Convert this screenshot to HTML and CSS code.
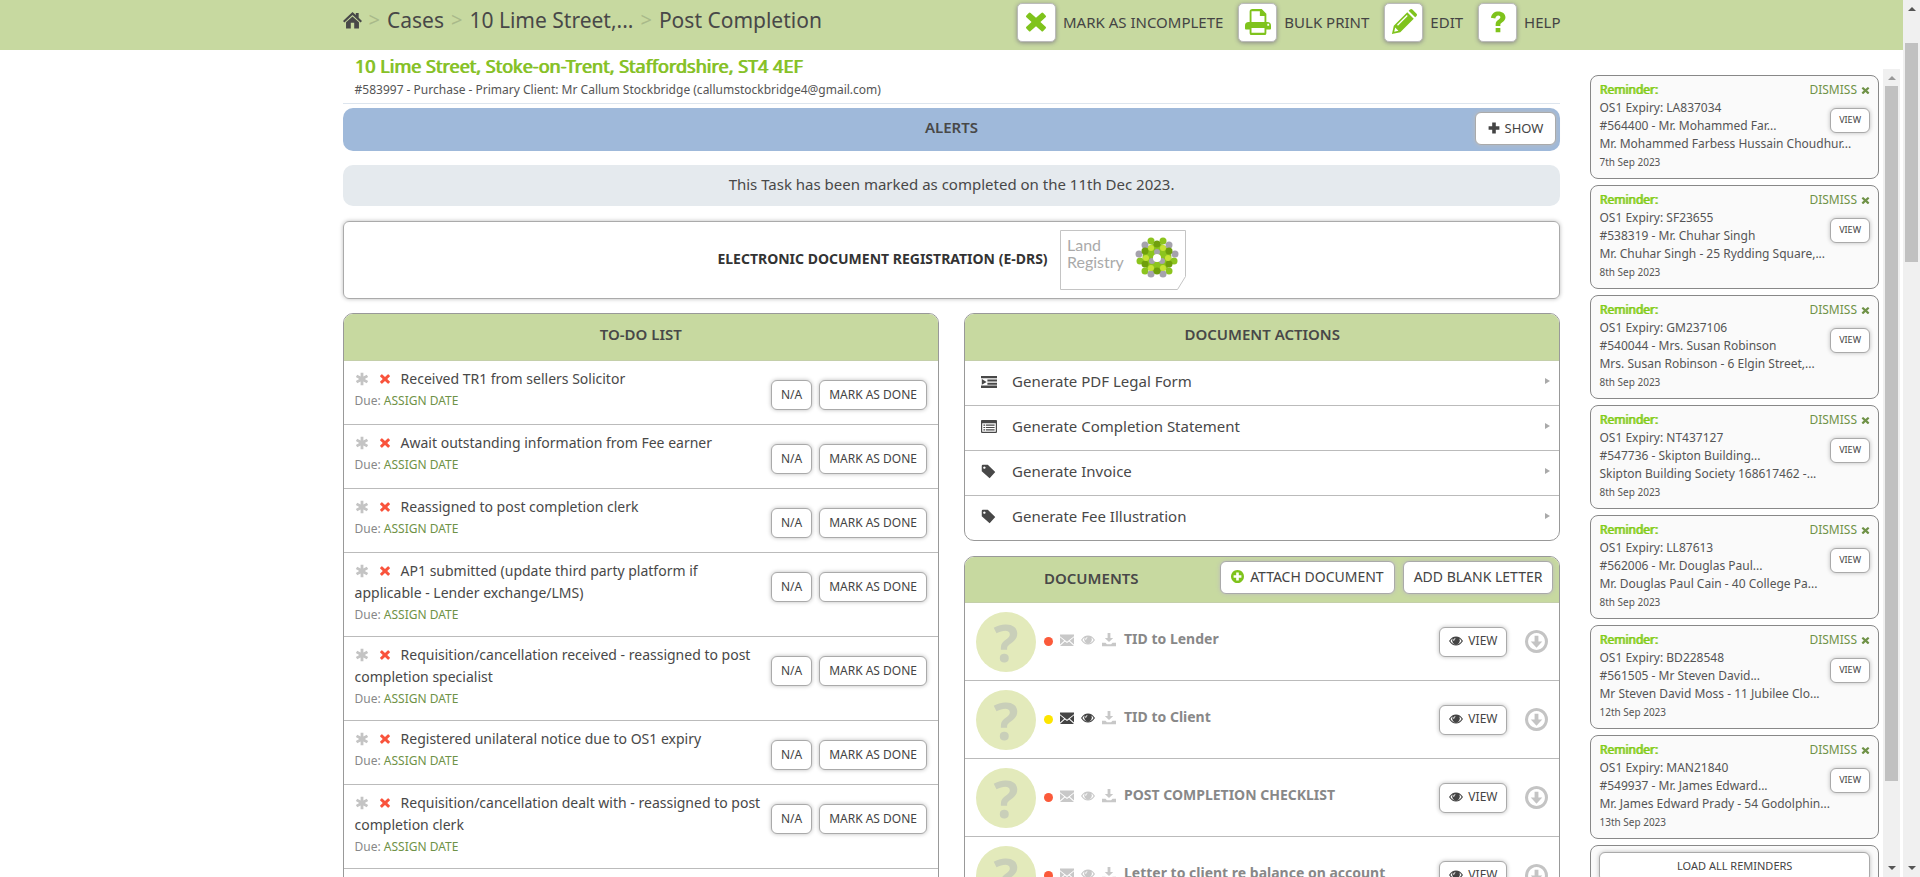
FILE: index.html
```html
<!DOCTYPE html>
<html lang="en">
<head>
<meta charset="utf-8">
<title>Post Completion</title>
<link rel="stylesheet" href="styles.css">
</head>
<body>
<svg class="sprite" aria-hidden="true">
  <symbol id="cross" viewBox="0 0 20 20"><path d="M4 2.500a1 1 0 0 1 1.500 0L10 6.500l4.500-4a1 1 0 0 1 1.500 0L18 4.500a1 1 0 0 1 0 1.500L13.700 10l4.300 4a1 1 0 0 1 0 1.500L16 17.500a1 1 0 0 1-1.500 0L10 13.500l-4.500 4a1 1 0 0 1-1.500 0L2 15.500a1 1 0 0 1 0-1.500L6.300 10 2 6a1 1 0 0 1 0-1.500z"/></symbol>
  <symbol id="plus" viewBox="0 0 20 20"><path d="M7 1h6v6h6v6h-6v6H7v-6H1V7h6z"/></symbol>
  <symbol id="home" viewBox="0 0 20 20"><path d="M10 1.500 0 11l1.500 1.500L10 4.700l8.500 7.800L20 11l-3.500-3.300V2.500h-3v2.300zM10 6.200l-6.800 6.200V19h5v-6h3.600v6h5v-6.600z"/></symbol>
  <symbol id="print" viewBox="0 0 28 28"><path fill-rule="evenodd" d="M5 14V3a3 3 0 0 1 3-3h10l5 5v9h1a4 4 0 0 1 4 4v3a1 1 0 0 1-1 1h-4v4a2 2 0 0 1-2 2H7a2 2 0 0 1-2-2v-4H1a1 1 0 0 1-1-1v-3a4 4 0 0 1 4-4zM7 2.500V14h14V7.500h-5v-5zM7 20.500v5h14v-5zm17-4.500v2h2v-2z"/></symbol>
  <symbol id="pencil" viewBox="0 0 28 28"><path fill-rule="evenodd" d="M1 27 3 18 17.500 3.500l7 7L10 25zM4.500 20 3.500 24.500 8 23.500zM7.500 18 18 7.500l-1-1L6.500 17zM19 2l1.500-1.500a2 2 0 0 1 2.500 0l4.500 4.500a2 2 0 0 1 0 2.500L26 9z"/></symbol>
  <symbol id="help" viewBox="0 0 20 28"><path d="M1 8.500C2 3 5.500.500 10.500.500c5 0 9 3 9 7.500 0 3-1.500 4.500-4 6.200-1.800 1.200-2.500 1.800-2.500 3.300v1.500H7V17c0-3 1.500-4.700 4-6.300 1.500-1 2-1.500 2-2.700s-1-2.200-2.700-2.200S7.500 7 6.500 9.500zM7 21.500h6V27H7z"/></symbol>
  <symbol id="star" viewBox="0 0 20 20"><path d="M8 1h4v5.500l4.800-2.700 2 3.400L14 10l4.800 2.800-2 3.400L12 13.500V19H8v-5.500l-4.800 2.700-2-3.400L6 10 1.200 7.200l2-3.400L8 6.500z"/></symbol>
  <symbol id="indent" viewBox="0 0 20 16"><path d="M0 1h20v3H0zM8 5.500h12V8H8zM8 9.500h12V12H8zM0 13h20v3H0zM1 5l6 3.700L1 12z"/></symbol>
  <symbol id="list" viewBox="0 0 20 16"><path fill-rule="evenodd" d="M1 0h18a1 1 0 0 1 1 1v14a1 1 0 0 1-1 1H1a1 1 0 0 1-1-1V1a1 1 0 0 1 1-1zm.500 4v10.500h17V4zM3 5.500h2V7H3zm3 0h11V7H6zM3 8.500h2V10H3zm3 0h11V10H6zM3 11.500h2V13H3zm3 0h11V13H6z"/></symbol>
  <symbol id="tag" viewBox="0 0 20 20"><path fill-rule="evenodd" d="M1 2.500A1.500 1.500 0 0 1 2.500 1H9l10 9.500-7.500 8.500L1 9.500zM4.500 3.200a1.600 1.600 0 1 0 .01 0z"/></symbol>
  <symbol id="mail" viewBox="0 0 20 20"><path d="M0 2h20v2.500l-10 8-10-8zM0 6l6 5-6 5.500zM20 6l-6 5 6 5.500zM7 12l3 2.400 3-2.400 7 6.500H0z"/></symbol>
  <symbol id="eye" viewBox="0 0 20 20"><path fill-rule="evenodd" d="M0 10c3-4.500 6-6.500 10-6.500s7 2 10 6.500c-3 4.500-6 6.500-10 6.500S3 14.500 0 10zm2 0c2 3 4.500 4.800 8 4.800s6-1.800 8-4.800c-1-1.500-2-2.600-3.200-3.400a5.500 5.500 0 1 1-9.600 0C4 7.400 3 8.500 2 10zm7-4c-2 .300-3 1.500-3 3.500h1.500c0-1.300.500-2 1.700-2.200z"/></symbol>
  <symbol id="down" viewBox="0 0 20 20"><path d="M8 0h4v7h4l-6 6-6-6h4zM0 14h5l2 2h6l2-2h5v5H0z"/></symbol>
  <symbol id="circle-down" viewBox="0 0 24 24"><path fill-rule="evenodd" d="M12 0a12 12 0 1 1-.01 0zM12 3.200a8.800 8.800 0 1 0 .01 0zM10 6h4v6h4l-6 6.500L6 12h4z"/></symbol>
  <symbol id="circle-plus" viewBox="0 0 20 20"><path fill-rule="evenodd" d="M10 0a10 10 0 1 1-.01 0zM8 4v4H4v4h4v4h4v-4h4V8h-4V4z"/></symbol>
</svg>

<div class="viewport">
  <header class="topbar">
    <div class="topbar-inner">
      <nav class="crumbs" aria-label="Breadcrumb">
        <a href="#" aria-label="Home"><svg class="i-home"><use href="#home"/></svg></a><span class="sep">&gt;</span>
        <a href="#">Cases</a><span class="sep">&gt;</span>
        <a href="#">10 Lime Street,...</a><span class="sep">&gt;</span>
        <a href="#">Post Completion</a>
      </nav>
      <div class="tools">
        <button class="tool"><span class="tile"><svg class="i-24"><use href="#cross"/></svg></span>MARK AS INCOMPLETE</button>
        <button class="tool"><span class="tile"><svg class="i-26"><use href="#print"/></svg></span>BULK PRINT</button>
        <button class="tool"><span class="tile"><svg class="i-26"><use href="#pencil"/></svg></span>EDIT</button>
        <button class="tool"><span class="tile"><svg class="i-22"><use href="#help"/></svg></span>HELP</button>
      </div>
    </div>
  </header>

  <div class="page">
    <main class="main">
      <div class="case-head">
        <h1>10 Lime Street, Stoke-on-Trent, Staffordshire, ST4 4EF</h1>
        <p>#583997 - Purchase - Primary Client: Mr Callum Stockbridge (callumstockbridge4@gmail.com)</p>
      </div>
      <section class="alerts"><h2>ALERTS</h2><button class="btn btn-lg"><svg class="i-12"><use href="#plus"/></svg>SHOW</button></section>
      <p class="notice">This Task has been marked as completed on the 11th Dec 2023.</p>
      <section class="edrs">
        <strong>ELECTRONIC DOCUMENT REGISTRATION (E-DRS)</strong>
        <svg class="registry" viewBox="0 0 126 60" role="img" aria-label="Land Registry">
          <path d="M.5.500h125v46l-8 13H.5z" fill="#fff" stroke="#c4c4c4"/>
          <text x="7" y="21">Land</text><text x="7" y="38">Registry</text>
          <circle cx="97" cy="28" r="9" fill="none" stroke="#8cc41e" stroke-width="11"/>
          <g fill="#8cc41e">
            <circle cx="91" cy="11" r="3.500"/><circle cx="103" cy="11" r="3.500"/><circle cx="80" cy="31" r="3.500"/><circle cx="114" cy="31" r="3.500"/><circle cx="85" cy="41" r="3.500"/><circle cx="109" cy="41" r="3.500"/>
          </g>
          <g fill="#a5a2ac">
            <circle cx="85" cy="15" r="3.500"/><circle cx="109" cy="15" r="3.500"/><circle cx="79" cy="24" r="3.500"/><circle cx="115" cy="24" r="3.500"/><circle cx="91" cy="44" r="3.500"/><circle cx="103" cy="44" r="3.500"/><circle cx="97" cy="22" r="3"/><circle cx="92" cy="31" r="3"/><circle cx="102" cy="31" r="3"/>
          </g>
          <g fill="#6f9f0c">
            <circle cx="97" cy="14" r="3.500"/><circle cx="85" cy="21" r="3.500"/><circle cx="109" cy="21" r="3.500"/><circle cx="85" cy="34" r="3.500"/><circle cx="109" cy="34" r="3.500"/><circle cx="97" cy="41" r="3.500"/>
          </g>
          <g fill="#c6e334">
            <circle cx="91" cy="18" r="3"/><circle cx="103" cy="18" r="3"/><circle cx="86" cy="28" r="3"/><circle cx="108" cy="28" r="3"/><circle cx="91" cy="38" r="3"/><circle cx="103" cy="38" r="3"/>
          </g>
          <circle cx="97" cy="28" r="4" fill="#fff"/>
        </svg>
      </section>

      <div class="columns">
        <section class="panel">
          <header class="panel-head"><h2>TO-DO LIST</h2></header>
          <ul class="rows" id="todo"></ul>
        </section>
        <div class="stack">
          <section class="panel">
            <header class="panel-head"><h2>DOCUMENT ACTIONS</h2></header>
            <ul class="rows">
              <li><a class="action" href="#"><svg class="i-wide"><use href="#indent"/></svg>Generate PDF Legal Form<span class="tri"></span></a></li>
              <li><a class="action" href="#"><svg class="i-wide"><use href="#list"/></svg>Generate Completion Statement<span class="tri"></span></a></li>
              <li><a class="action" href="#"><svg class="i-tag"><use href="#tag"/></svg>Generate Invoice<span class="tri"></span></a></li>
              <li><a class="action" href="#"><svg class="i-tag"><use href="#tag"/></svg>Generate Fee Illustration<span class="tri"></span></a></li>
            </ul>
          </section>
          <section class="panel">
            <header class="panel-head docs-head"><h2>DOCUMENTS</h2><div class="head-buttons"><button class="btn btn-lg attach"><svg class="i-13"><use href="#circle-plus"/></svg>ATTACH DOCUMENT</button><button class="btn btn-lg">ADD BLANK LETTER</button></div></header>
            <ul class="rows" id="docs"></ul>
          </section>
        </div>
      </div>
    </main>

    <aside class="side">
      <div class="reminders" id="reminders"></div>
      <div class="bar side-bar" aria-hidden="true"><span class="up"></span><span class="thumb"></span><span class="dn"></span></div>
    </aside>
  </div>
</div>
<div class="bar page-bar" aria-hidden="true"><span class="up"></span><span class="thumb"></span><span class="dn"></span></div>
<script src="app.js"></script>
</body>
</html>
```
FILE: styles.css
```css
* { box-sizing: border-box; }
html, body { height: 100%; }
body { margin: 0; display: flex; overflow: hidden; background: #fff; color: #484848; font: 14px/22px "Noto Sans", "Open Sans", sans-serif; }
h1, h2, p, ul { margin: 0; padding: 0; }
ul { list-style: none; }
a { color: inherit; text-decoration: none; }
button { font-family: inherit; color: #444; cursor: pointer; }
svg { fill: currentColor; flex: none; }
.sprite { position: absolute; width: 0; height: 0; }
.viewport { flex: 1; min-width: 0; height: 100vh; overflow: hidden; display: flex; flex-direction: column; }

.i-home { width: 19px; height: 20px; display: block; }
.i-12 { width: 12px; height: 12px; }
.i-13 { width: 13px; height: 13px; }
.i-14 { width: 14px; height: 14px; }
.i-tag { width: 15px; height: 15px; margin-right: 1px; }
.i-wide { width: 16px; height: 13px; }
.i-24 { width: 24px; height: 24px; }
.i-22 { width: 22px; height: 22px; }
.i-26 { width: 26px; height: 26px; }

.topbar { flex: none; height: 50px; padding: 0 18%; background: #c7d9a0; }
.topbar-inner { display: flex; justify-content: space-between; height: 44px; align-items: center; }
.crumbs { display: flex; align-items: center; gap: 7px; font-size: 21px; line-height: 40px; padding-bottom: 4px; }
.sep { color: #a9b98a; font-size: 20px; }
.tools { display: flex; gap: 15px; }
.tool { display: flex; align-items: center; gap: 7px; padding: 0; border: 0; background: none; font-size: 15px; }
.tile { width: 39px; height: 39px; display: grid; place-items: center; background: #fff; border: 1px solid #bbb; border-radius: 5px; color: #7fc31c; box-shadow: 0 1px 4px #888; }

.page { flex: 1; min-height: 0; display: grid; grid-template-columns: 64% 18%; grid-template-rows: 100%; justify-content: end; }
.main { min-width: 0; }
.case-head { padding: 4px 12px 2px; border-bottom: 1px solid #dde5ee; }
.case-head h1 { font-size: 18px; line-height: 25px; font-weight: 400; color: #86c127; text-shadow: 1px 0 #86c127; }
.case-head p { font-size: 12px; line-height: 22px; color: #555; }
h2 { font-size: 15px; line-height: 22px; font-weight: 600; }
.alerts { display: flex; align-items: center; justify-content: center; position: relative; height: 43px; margin-top: 4px; padding-bottom: 5px; background: #9fb9da; border-radius: 10px; }
.alerts .btn { position: absolute; right: 4px; top: 4px; }
.notice { margin-top: 14px; padding: 7px 8px 9px; line-height: 25px; text-align: center; font-size: 15px; background: #e5eaee; border-radius: 10px; }
.edrs { display: flex; align-items: center; justify-content: center; gap: 12px; margin-top: 15px; padding: 8px; border: 1px solid #aaa; border-radius: 6px; box-shadow: 0 0 4px #bbb; }
.edrs strong { font-size: 14px; line-height: 20px; padding-bottom: 2px; color: #333; }
.registry { width: 126px; height: 60px; display: block; }
.registry text { font: 16px Lato, sans-serif; fill: #aaa; }

.btn { display: inline-flex; align-items: center; justify-content: center; gap: 5px; height: 30px; padding: 0 9px 2px; background: #fff; border: 1px solid #aaa; border-radius: 6px; font-size: 12px; white-space: nowrap; box-shadow: 0 0 4px #bbb; }
.btn-lg { height: 33px; padding: 0 10px 2px; font-size: 14px; }
.alerts .btn-lg { font-size: 13px; padding: 0 12px 2px; }

.columns { display: grid; grid-template-columns: 1fr 1fr; gap: 25px; margin-top: 14px; align-items: start; }
.stack { display: grid; gap: 15px; min-width: 0; }
.panel { min-width: 0; border: 1px solid #999; border-radius: 10px; overflow: hidden; }
.panel-head { height: 47px; display: flex; align-items: center; justify-content: center; padding-bottom: 6px; background: #c7d9a0; border-bottom: 1px solid #c4cfa9; }
.rows > li + li { border-top: 1px solid #bbb; }

.task { display: flex; justify-content: space-between; padding: 7px 11px 10px; min-height: 63px; }
.task + .task { min-height: 64px; }
.task-text { flex: 1; min-width: 0; margin-right: 10px; }
.task-title svg { margin-right: 10px; vertical-align: -2px; }
.task-title .star { color: #c4c4c4; }
.task-title .no { color: #f9533c; width: 12px; }
.due { font-size: 12px; color: #888; }
.due a { color: #6f9247; }
.task-buttons { display: flex; gap: 7px; padding-top: 12px; }

.action { display: flex; align-items: center; height: 44px; padding: 0 9px 4px 16px; gap: 15px; font-size: 15px; }
.tri { margin-left: auto; border: 3px solid transparent; border-left: 5px solid #aaa; border-right: 0; }

.docs-head { height: 46px; justify-content: space-between; padding: 0 6px 4px 79px; }
.head-buttons { display: flex; gap: 8px; }
.attach svg { color: #7fc31c; margin-right: 1px; }
.doc { display: flex; align-items: center; height: 78px; padding: 0 11px 0 11px; color: #888; }
.doc:first-child { height: 77px; }
.badge { width: 60px; height: 60px; border-radius: 50%; background: #e3eabb; color: #c9cfb9; display: grid; place-items: center; flex: none; font-size: 52px; font-weight: 700; line-height: 60px; }
.dot { width: 9px; height: 9px; border-radius: 50%; background: #fb5a3a; margin: 0 7px 0 8px; }
.dot.yellow { background: #fde500; }
.doc-icons { display: flex; gap: 7px; color: #c8c8c8; margin-right: 8px; padding-bottom: 3px; }
.doc-icons .on { color: #444; }
.doc-name { font-weight: 700; font-size: 14px; padding-bottom: 5px; }
.doc .btn { margin-left: auto; margin-right: 18px; }
.doc .get { color: #c4c4c4; width: 23px; height: 23px; }

.side { display: flex; justify-content: space-between; padding: 19px 3px 0 30px; min-width: 0; }
.reminders { flex: 1; min-width: 0; padding-top: 6px; margin-right: 4px; }
.card { margin-bottom: 6px; padding: 5px 8px 7px; min-height: 104px; background: #fafafa; border: 1px solid #888; border-radius: 8px; font-size: 12px; line-height: 18px; color: #555; position: relative; }
.card b { font-weight: 400; color: #84cc16; text-shadow: 1px 0 #84cc16; }
.card .date { font-size: 10px; }
.dismiss { position: absolute; top: 5px; right: 8px; color: #6f9247; display: flex; align-items: center; gap: 4px; }
.dismiss svg { width: 9px; height: 9px; }
.card .view { position: absolute; right: 8px; top: 32px; height: 25px; padding: 0 8px 3px; font-size: 9px; }
.card .load { width: 100%; margin-top: 1px; padding-bottom: 4px; font-size: 11px; }

.bar { display: flex; flex-direction: column; align-items: center; width: 17px; flex: none; background: #f0f0f0; }
.bar .up, .bar .dn { border: 4px solid transparent; }
.bar .up { border-bottom-color: #555; border-top: 0; margin: 7px 0 6px; }
.bar .dn { border-top-color: #555; border-bottom: 0; margin: auto 0 7px; }
.bar .thumb { width: 13px; background: #c1c1c1; }
.side-bar .thumb { height: 86%; }
.side-bar .up { border-bottom-color: #999; }
.page-bar .thumb { height: 25%; margin-top: 26px; }
```
FILE: app.js
```js
const icon = (name, cls) => `<svg class="${cls}"><use href="#${name}"/></svg>`;

const tasks = [
  'Received TR1 from sellers Solicitor',
  'Await outstanding information from Fee earner',
  'Reassigned to post completion clerk',
  'AP1 submitted (update third party platform if applicable - Lender exchange/LMS)',
  'Requisition/cancellation received - reassigned to post completion specialist',
  'Registered unilateral notice due to OS1 expiry',
  'Requisition/cancellation dealt with - reassigned to post completion clerk'
];
document.getElementById('todo').innerHTML = tasks.map(t => `
  <li class="task"><div class="task-text"><div class="task-title">${icon('star', 'i-14 star')}${icon('cross', 'i-14 no')}${t}</div>
  <div class="due">Due: <a href="#">ASSIGN DATE</a></div></div>
  <div class="task-buttons"><button class="btn">N/A</button><button class="btn">MARK AS DONE</button></div></li>`).join('') +
  '<li class="task"></li>';

const docs = [
  ['TID to Lender', false],
  ['TID to Client', true],
  ['POST COMPLETION CHECKLIST', false],
  ['Letter to client re balance on account', false]
];
document.getElementById('docs').innerHTML = docs.map(([name, sent]) => `
  <li class="doc"><span class="badge">?</span><span class="dot${sent ? ' yellow' : ''}"></span>
  <span class="doc-icons">${icon('mail', 'i-14' + (sent ? ' on' : ''))}${icon('eye', 'i-14' + (sent ? ' on' : ''))}${icon('down', 'i-14')}</span>
  <span class="doc-name">${name}</span><button class="btn">${icon('eye', 'i-14')}VIEW</button>${icon('circle-down', 'get')}</li>`).join('');

const reminders = [
  ['LA837034', '#564400 - Mr. Mohammed Far...', 'Mr. Mohammed Farbess Hussain Choudhur...', '7th Sep 2023'],
  ['SF23655', '#538319 - Mr. Chuhar Singh', 'Mr. Chuhar Singh - 25 Rydding Square,...', '8th Sep 2023'],
  ['GM237106', '#540044 - Mrs. Susan Robinson', 'Mrs. Susan Robinson - 6 Elgin Street,...', '8th Sep 2023'],
  ['NT437127', '#547736 - Skipton Building...', 'Skipton Building Society 168617462 -...', '8th Sep 2023'],
  ['LL87613', '#562006 - Mr. Douglas Paul...', 'Mr. Douglas Paul Cain - 40 College Pa...', '8th Sep 2023'],
  ['BD228548', '#561505 - Mr Steven David...', 'Mr Steven David Moss - 11 Jubilee Clo...', '12th Sep 2023'],
  ['MAN21840', '#549937 - Mr. James Edward...', 'Mr. James Edward Prady - 54 Godolphin...', '13th Sep 2023']
];
document.getElementById('reminders').innerHTML = reminders.map(([code, ref, who, date]) => `
  <article class="card"><b>Reminder:</b><a class="dismiss" href="#">DISMISS ${icon('cross', '')}</a>
  <div>OS1 Expiry: ${code}</div><div>${ref}</div><div>${who}</div><div class="date">${date}</div>
  <button class="btn view">VIEW</button></article>`).join('') +
  '<div class="card"><button class="btn load">LOAD ALL REMINDERS</button></div>';
```
